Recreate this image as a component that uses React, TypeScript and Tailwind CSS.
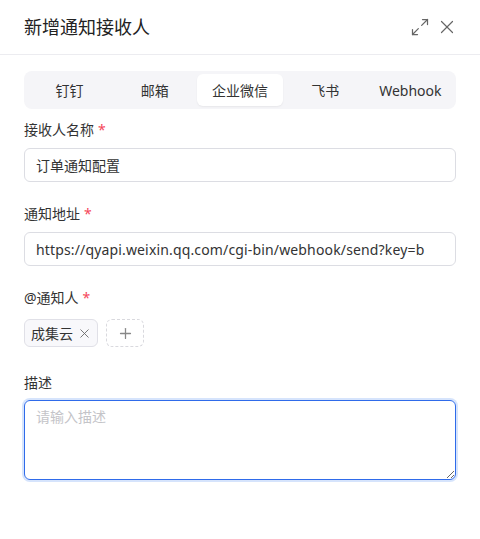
import { Maximize2, X, Plus } from 'lucide-react'

const tabs = ['钉钉', '邮箱', '企业微信', '飞书', 'Webhook']

function Label({ text, required }: { text: string; required?: boolean }) {
  return (
    <div className="h-[22px] leading-[22px] text-[14px] text-[#333]">
      {text}
      {required && <span className="ml-1 text-[#f5475a]">*</span>}
    </div>
  )
}

export default function App() {
  return (
    <div
      className="w-[480px] h-[539px] bg-white overflow-hidden"
      style={{ fontFamily: '"Noto Sans", "Noto Sans CJK SC", sans-serif' }}
    >
      {/* Header */}
      <div className="h-[55px] flex items-center justify-between pl-6 pr-[22px] border-b border-[#ececf0]">
        <h2 className="text-[18px] text-[#222] font-normal">新增通知接收人</h2>
        <div className="flex items-center gap-[6px] text-[#666]">
          <Maximize2 size={20} strokeWidth={1.5} />
          <X size={22} strokeWidth={1.3} />
        </div>
      </div>

      <div className="px-6 pt-[16px]">
        {/* Tabs */}
        <div className="grid grid-cols-5 p-[3px] bg-[#f5f5f8] rounded-lg">
          {tabs.map((t) => (
            <div
              key={t}
              className={
                'h-8 flex items-center justify-center text-[14px] text-[#333] rounded-md ' +
                (t === '企业微信' ? 'bg-white shadow-[0_1px_2px_rgba(0,0,0,0.06)]' : '')
              }
            >
              {t}
            </div>
          ))}
        </div>

        {/* Name */}
        <div className="mt-[10px]">
          <Label text="接收人名称" required />
          <div className="mt-[7px] h-[34px] border border-[#dcdde3] rounded-md flex items-center px-[11px] text-[14px] text-[#333]">
            订单通知配置
          </div>
        </div>

        {/* Url */}
        <div className="mt-[21px]">
          <Label text="通知地址" required />
          <div className="mt-[7px] h-[34px] border border-[#dcdde3] rounded-md flex items-center pl-[11px] pr-[12px] text-[14px] text-[#333]">
            <span className="block min-w-0 flex-1 overflow-hidden whitespace-nowrap tracking-[0.15px]">
              https://qyapi.weixin.qq.com/cgi-bin/webhook/send?key=b
            </span>
          </div>
        </div>

        {/* Mention */}
        <div className="mt-[21px]">
          <Label text="@通知人" required />
          <div className="mt-[10px] flex items-center gap-2">
            <div className="h-7 flex items-center gap-[4px] pl-[6px] pr-[5px] bg-[#f8f8fb] border border-[#e0e0e7] rounded-md text-[14px] text-[#333]">
              成集云
              <X size={15} strokeWidth={1.4} className="text-[#666]" />
            </div>
            <div className="h-7 w-[38px] flex items-center justify-center border border-dashed border-[#d9d9de] rounded-md text-[#888]">
              <Plus size={17} strokeWidth={1.8} />
            </div>
          </div>
        </div>

        {/* Description */}
        <div className="mt-[25px]">
          <Label text="描述" />
          <textarea
            placeholder="请输入描述"
            className="mt-[6px] block w-full h-[80px] border border-[#2f6bea] rounded-md px-[11px] py-[5px] text-[14px] text-[#333] placeholder:text-[#c4c4c8] outline-none ring-2 ring-[#d6e4fc]"
          />
        </div>
      </div>
    </div>
  )
}
